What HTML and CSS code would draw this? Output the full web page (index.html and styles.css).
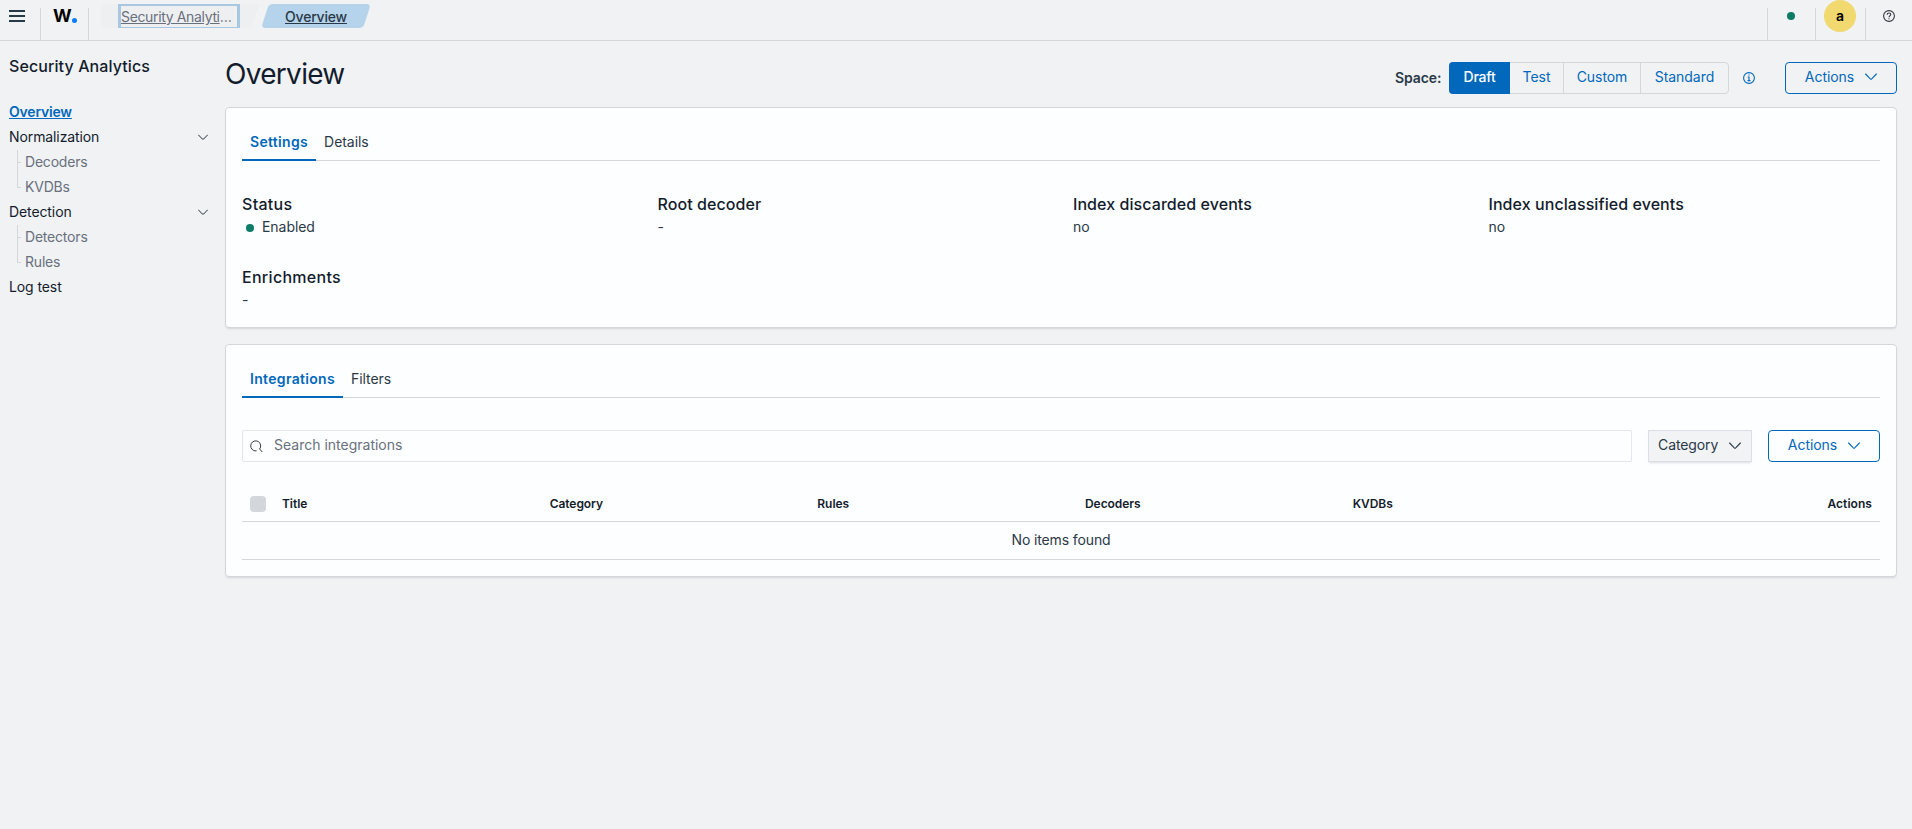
FILE: index.html
```html
<!DOCTYPE html>
<html lang="en">
<head>
<meta charset="utf-8">
<title>Overview - Security Analytics</title>
<link rel="stylesheet" href="styles.css">
</head>
<body>
<svg class="defs" aria-hidden="true">
  <symbol id="chevron" viewBox="0 0 12 8"><path d="M.6 1 5.3 5.9a1 1 0 0 0 1.4 0L11.4 1" fill="none" stroke="currentColor" stroke-width="1.1" stroke-linecap="round"/></symbol>
</svg>
<header class="header">
  <button class="menu" aria-label="Menu"><svg width="16" height="12" viewBox="0 0 16 12"><path d="M0 0h16v2H0zM0 5h16v2H0zM0 10h16v2H0z" fill="#263b48"/></svg></button>
  <a class="logo"><span>W</span><i></i></a>
  <nav class="crumbs">
    <a class="crumb crumb-first"><span class="crumb-focus"><span class="crumb-text">Security Analyti</span>…</span></a>
    <a class="crumb crumb-last"><span class="crumb-text">Overview</span></a>
  </nav>
  <div class="header-cell health"><i class="dot"></i></div>
  <div class="header-cell user"><span class="avatar">a</span></div>
  <div class="header-cell help"><svg width="12" height="12" viewBox="0 0 12 12" fill="none" stroke="#343741" stroke-width="1.1"><circle cx="6" cy="6" r="5.4"/><path d="M4.200 4.700C4.200 3.600 5 3 6 3s1.800.6 1.800 1.600C7.800 5.800 6 5.800 6 7.200M6 8.200v1"/></svg></div>
</header>
<div class="layout">
  <aside class="sidebar">
    <h2>Security Analytics</h2>
    <ul class="nav">
      <li class="current"><a>Overview</a></li>
      <li class="group"><a>Normalization</a><svg class="chev-s"><use href="#chevron"/></svg></li>
      <li class="child"><a>Decoders</a></li>
      <li class="child last"><a>KVDBs</a></li>
      <li class="group"><a>Detection</a><svg class="chev-s"><use href="#chevron"/></svg></li>
      <li class="child"><a>Detectors</a></li>
      <li class="child last"><a>Rules</a></li>
      <li><a>Log test</a></li>
    </ul>
  </aside>
  <main class="main">
    <div class="page-head">
      <h1>Overview</h1>
      <span class="space">Space:</span>
      <div class="switch">
        <button class="on draft">Draft</button><button class="test">Test</button><button class="custom">Custom</button><button class="standard">Standard</button>
      </div>
      <svg class="info" width="12" height="12" viewBox="0 0 12 12" fill="none" stroke="#0268bc" stroke-width="1.1"><circle cx="6" cy="6" r="5.4"/><path d="M4.700 5h1.300v3.500M4.500 8.600h3M5.400 3h1.200"/></svg>
      <button class="btn">Actions<svg class="chev"><use href="#chevron"/></svg></button>
    </div>
    <section class="panel panel-settings">
      <div class="tabs"><a class="tab active">Settings</a><a class="tab">Details</a></div>
      <dl class="facts">
        <div><dt>Status</dt><dd><i class="dot"></i>Enabled</dd></div>
        <div><dt>Root decoder</dt><dd>-</dd></div>
        <div><dt>Index discarded events</dt><dd>no</dd></div>
        <div><dt>Index unclassified events</dt><dd>no</dd></div>
        <div><dt>Enrichments</dt><dd>-</dd></div>
      </dl>
    </section>
    <section class="panel panel-list">
      <div class="tabs"><a class="tab active">Integrations</a><a class="tab">Filters</a></div>
      <div class="toolbar">
        <label class="search"><svg width="13" height="13" viewBox="0 0 13 13" fill="none" stroke="#343741"><path d="M3.800 10.500A5 5 0 1 1 9.600 9l2.700 3M3.800 10.500q1.200.6 2.700.3"/></svg><span>Search integrations</span></label>
        <button class="filter">Category<svg class="chev"><use href="#chevron"/></svg></button>
        <button class="btn">Actions<svg class="chev"><use href="#chevron"/></svg></button>
      </div>
      <table class="table">
        <thead><tr><th class="check"><i></i></th><th>Title</th><th>Category</th><th>Rules</th><th>Decoders</th><th>KVDBs</th><th class="right">Actions</th></tr></thead>
        <tbody><tr><td colspan="7">No items found</td></tr></tbody>
      </table>
    </section>
  </main>
</div>
</body>
</html>
```
FILE: styles.css
```css
* { box-sizing: border-box; }
body { margin: 0; height: 829px; overflow: hidden; background: #f0f2f4; color: #2a3947; font: 14px/20px Inter, "Noto Sans", sans-serif; letter-spacing: -.05px; }
h1, h2, dl, dd, ul { margin: 0; padding: 0; }
ul { list-style: none; }
button { padding: 0 0 2px; border: 0; background: none; font: inherit; letter-spacing: inherit; color: inherit; }
svg { flex: none; display: block; }
.defs { position: absolute; width: 0; height: 0; }
.dot { display: block; width: 8px; height: 8px; border-radius: 50%; background: #0d7d68; }
.chev { width: 12px; height: 8px; }
.chev-s { width: 10px; height: 7px; }

.header { display: flex; height: 41px; border-bottom: 1px solid #d3d7dc; }
.menu { width: 40px; height: 32px; padding: 0 0 0 9px; display: flex; align-items: center; }
.logo { display: flex; width: 49px; height: 33px; margin-top: 8px; padding-left: 12px; border: solid #d3d7dc; border-width: 0 1px; color: #000; font-weight: 700; font-size: 18px; line-height: 16px; }
.logo span { width: 19px; letter-spacing: 0; }
.logo i { width: 5px; height: 5px; margin-top: 10px; border-radius: 50%; background: #0a7cff; }
.crumbs { display: flex; flex: 1; padding: 4px 0 0 12px; }
.crumb { display: flex; height: 24px; }
.crumb-first { width: 159px; padding-left: 17px; background: #eeeff1; border-radius: 4px 0 0 4px; clip-path: polygon(0 0, 100% 0, 94% 100%, 0 100%); color: #69707d; }
.crumb-focus { width: 122px; height: 24px; border: solid #a8c8e2; border-width: 2px 3px 1px; line-height: 21px; letter-spacing: -.35px; white-space: nowrap; }
.crumb-text { text-decoration: underline; }
.crumb-last { position: relative; width: 110px; margin-left: 1px; justify-content: center; font-weight: 500; line-height: 25px; letter-spacing: -.2px; }
.crumb-last::before { content: ""; position: absolute; z-index: -1; inset: 0 4px; background: #b5d4ec; border-radius: 4px; transform: skewX(-18deg); }
.header-cell { display: flex; height: 32px; margin-top: 8px; border-left: 1px solid #d3d7dc; }
.health { width: 48px; padding: 4px 0 0 19px; }
.user { width: 50px; padding-left: 8px; }
.avatar { width: 32px; height: 32px; margin-top: -8px; border-radius: 50%; background: #f1d86f; color: #000; font-weight: 600; line-height: 31px; text-align: center; }
.help { width: 47px; padding: 2px 0 0 17px; }

.layout { display: flex; }
.sidebar { width: 225px; padding: 16px 16px 0 9px; }
.sidebar h2 { height: 42px; font-size: 16px; line-height: 19px; font-weight: 500; color: #131c2c; letter-spacing: .1px; white-space: nowrap; }
.nav li { display: flex; align-items: center; height: 25px; padding-right: 1px; color: #131c2c; letter-spacing: -.1px; }
.nav .current { color: #0268bc; font-weight: 600; text-decoration: underline; letter-spacing: -.2px; }
.nav .group { justify-content: space-between; }
.nav .chev-s { margin-top: 2px; }
.nav .child { position: relative; padding-left: 16px; color: #69707d; letter-spacing: -.2px; }
.nav .child::before { content: ""; position: absolute; left: 8px; top: 1px; height: 25px; border-left: 1px solid #d3d7dc; }
.nav .child::after { content: ""; position: absolute; left: 8px; top: 13px; width: 4px; border-top: 1px solid #d3d7dc; }
.nav .last::before { height: 13px; }

.main { width: 1672px; }
.page-head { display: flex; align-items: center; height: 66px; padding-top: 8px; }
.page-head h1 { flex: 1; margin-top: -9px; font-size: 28px; line-height: 32px; font-weight: 400; color: #131c2c; letter-spacing: -.7px; }
.page-head .space { width: 54px; font-weight: 600; letter-spacing: -.1px; }
.switch { display: flex; width: 280px; height: 32px; margin: -1px 14px 0 0; border: 1px solid #d3d7dc; border-radius: 4px; color: #0268bc; }
.switch button + button { border-left: 1px solid #d3d7dc; }
.switch .draft { width: 61px; margin: -1px 0 -1px -1px; }
.switch .on { background: #0268bc; color: #fff; font-weight: 500; letter-spacing: -.2px; border-radius: 4px 0 0 4px; }
.switch .test { width: 53px; border-left: 0; }
.switch .draft + .test { border-left: 0; }
.switch .custom { width: 77px; }
.switch .standard { flex: 1; }
.info { margin-right: 30px; }
.btn { display: flex; align-items: center; justify-content: center; gap: 11px; width: 112px; height: 32px; border: 1px solid #0268bc; border-radius: 4px; color: #0268bc; }
.btn .chev { margin-top: 1px; }
.page-head .btn { margin-top: -1px; }

.panel { padding: 16px; border: 1px solid #d3d7dc; border-radius: 4px; background: #fdfeff; box-shadow: 0 2px 2px -1px rgba(140, 150, 160, .3); }
.panel-settings { height: 221px; }
.panel-list { height: 233px; margin-top: 16px; }
.tabs { display: flex; height: 37px; border-bottom: 1px solid #d3d7dc; }
.tab { height: 37px; padding: 8px; }
.tab.active { color: #0268bc; font-weight: 600; letter-spacing: .32px; border-bottom: 2px solid #0268bc; }
.facts { display: grid; grid-template-columns: repeat(4, 1fr); column-gap: 24px; padding-top: 32px; grid-auto-rows: 73px; }
.facts dt { font-size: 16px; line-height: 22px; font-weight: 500; color: #131c2c; letter-spacing: .07px; }
.facts div:first-child dt, .facts div:last-child dt { letter-spacing: .3px; }
.facts dd { display: flex; align-items: center; line-height: 22px; margin-top: 1px; }
.facts .dot { margin: 2px 8px 0 4px; }
.toolbar { display: flex; gap: 16px; padding-top: 32px; }
.search { display: flex; align-items: center; gap: 11px; flex: 1; height: 32px; padding-left: 7px; border: 1px solid #e3e6f1; border-radius: 2px; color: #69707d; }
.search span { margin-top: -2px; letter-spacing: 0; }
.filter { display: flex; align-items: center; justify-content: space-between; width: 104px; height: 32px; padding: 0 10px 2px 9px; border: 1px solid #dcdfea; background: #f1f3f5; box-shadow: 0 2px 2px -1px rgba(140, 150, 160, .3); letter-spacing: -.1px; }
.filter .chev { margin-top: 2px; }
.table { width: 1638px; margin-top: 24px; border-collapse: separate; border-spacing: 0; table-layout: fixed; }
.table th { height: 36px; padding: 0 8px; border-bottom: 1px solid #d3d7dc; font-size: 12px; font-weight: 600; text-align: left; color: #131c2c; }
.table .check { width: 32px; }
.table .check i { display: block; width: 16px; height: 16px; border-radius: 4px; background: #d3d7dc; }
.table .right { text-align: right; letter-spacing: .05px; }
.table td { height: 38px; padding: 0 0 1px; border-bottom: 1px solid #d3d7dc; text-align: center; letter-spacing: -.12px; }
```
